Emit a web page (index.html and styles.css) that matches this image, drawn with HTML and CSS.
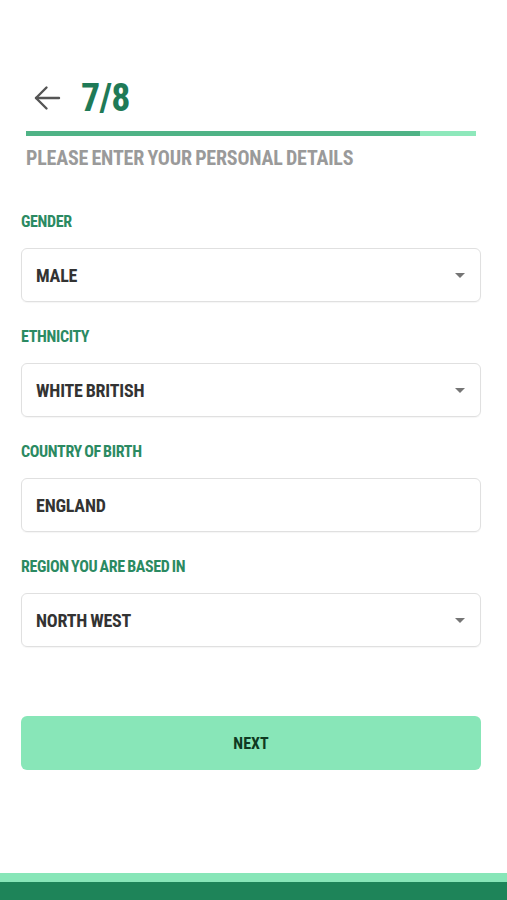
FILE: index.html
```html
<!DOCTYPE html>
<html lang="en">
<head>
<meta charset="utf-8">
<title>Personal details</title>
<link rel="stylesheet" href="styles.css">
</head>
<body>
<div class="screen">
  <header class="header">
    <div class="title-row">
      <button class="back" aria-label="Back">
        <svg width="28" height="28" viewBox="0 0 28 28" fill="none" stroke="#555" stroke-width="2.4" stroke-linecap="round" stroke-linejoin="round">
          <path d="M26 14H3"/>
          <path d="M13.5 3.5L3 14l10.5 10.5"/>
        </svg>
      </button>
      <h1 class="step">7/8</h1>
    </div>
    <div class="progress"><div class="progress-fill" style="width:87.5%"></div></div>
    <p class="subtitle">Please enter your personal details</p>
  </header>

  <form class="form">
    <div class="field">
      <label class="label">Gender</label>
      <div class="box select"><span class="value">Male</span><span class="caret"></span></div>
    </div>
    <div class="field">
      <label class="label">Ethnicity</label>
      <div class="box select"><span class="value">White British</span><span class="caret"></span></div>
    </div>
    <div class="field">
      <label class="label">Country of birth</label>
      <div class="box"><span class="value">England</span></div>
    </div>
    <div class="field">
      <label class="label">Region you are based in</label>
      <div class="box select"><span class="value">North West</span><span class="caret"></span></div>
    </div>
    <button type="button" class="next">Next</button>
  </form>
</div>
<footer class="footer">
  <div class="footer-light"></div>
  <div class="footer-dark"></div>
</footer>
</body>
</html>
```
FILE: styles.css
```css
* { box-sizing: border-box; }
html, body { margin: 0; padding: 0; background: #fff; }
body {
  width: 507px;
  height: 900px;
  overflow: hidden;
  display: flex;
  flex-direction: column;
  font-family: Roboto, "DejaVu Sans Condensed", sans-serif;
  font-stretch: 75%;
  font-weight: 700;
  text-transform: uppercase;
  word-spacing: -1px;
}
.screen { flex: 1; }
.header { padding: 78px 31px 0 26px; }
.title-row { display: flex; align-items: center; height: 40px; }
.back {
  border: 0; background: none; padding: 0; margin: 0 0 0 7px;
  width: 28px; height: 28px; display: flex;
}
.step {
  margin: 0 0 0 20px;
  font-size: 38px;
  line-height: 40px;
  letter-spacing: -0.8px;
  color: #1f7a57;
}
.progress {
  margin-top: 13px;
  height: 5px;
  background: #8ee8bb;
}
.progress-fill { height: 100%; background: #4fb386; }
.subtitle {
  margin: 10px 0 0;
  font-size: 20px;
  line-height: 24px;
  letter-spacing: -0.2px;
  color: #9a9a9a;
}
.form { padding: 43px 26px 0 21px; display: flex; flex-direction: column; }
.field { display: flex; flex-direction: column; margin-bottom: 26px; }
.label {
  font-size: 16px;
  line-height: 18px;
  color: #2b8a62;
  letter-spacing: -0.35px;
  margin-bottom: 17px;
}
.box {
  height: 54px;
  border: 1px solid #e0e0e0;
  border-radius: 6px;
  display: flex;
  align-items: center;
  justify-content: space-between;
  padding: 0 15px 0 14px;
  box-shadow: 0 1px 1px rgba(0,0,0,0.04);
}
.value {
  font-size: 18px;
  letter-spacing: -0.2px;
  color: #333;
}
.caret {
  width: 0; height: 0;
  border-left: 5px solid transparent;
  border-right: 5px solid transparent;
  border-top: 5px solid #757575;
}
.next {
  margin-top: 43px;
  height: 54px;
  border: 0;
  border-radius: 6px;
  background: #88e6b8;
  font-family: inherit;
  font-stretch: inherit;
  font-weight: 700;
  text-transform: uppercase;
  font-size: 16px;
  color: #0f3a22;
}
.footer { flex: none; }
.footer-light { height: 9px; background: #88e6b8; }
.footer-dark { height: 18px; background: #1e8459; }
```
